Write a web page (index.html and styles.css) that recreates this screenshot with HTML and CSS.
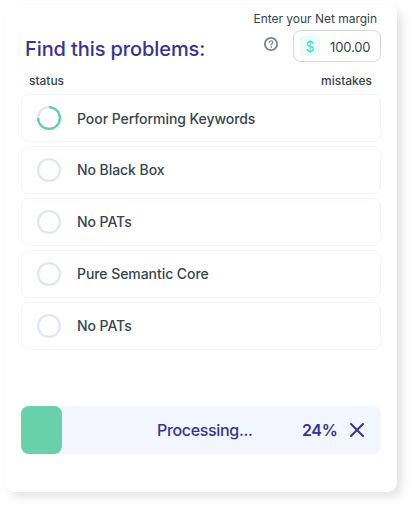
FILE: index.html
```html
<!DOCTYPE html>
<html lang="en">
<head>
<meta charset="utf-8">
<title>Find this problems</title>
<link rel="stylesheet" href="styles.css">
</head>
<body>
<main class="card">
  <header class="head">
    <h1 class="title">Find this problems:</h1>
    <div class="margin">
      <div class="margin-label">Enter your Net margin</div>
      <div class="margin-row">
        <svg class="help" viewBox="0 0 14 14" fill="none" stroke="#75838f" stroke-linecap="round"><circle cx="7" cy="7" r="6.1" stroke-width="1.8"/><path d="M5.2 5.6C5.2 3.2 8.8 3.2 8.8 5.4C8.8 6.8 7.1 6.7 7.1 8" stroke-width="1.2"/><circle cx="7.1" cy="10" r=".3" stroke-width=".9"/></svg>
        <div class="field"><span class="currency">$</span><span class="amount">100.00</span></div>
      </div>
    </div>
  </header>
  <div class="columns"><span>status</span><span>mistakes</span></div>
  <ul class="list">
    <li class="item"><svg class="ring" viewBox="0 0 24 24" fill="none" stroke-width="2.2"><circle cx="12" cy="12" r="10.9" stroke="#e1e4f5"/><path d="M12 1.1A10.9 10.9 0 1 1 1.1 12" stroke="#63cfa7"/></svg><span>Poor Performing Keywords</span></li>
    <li class="item"><svg class="ring" viewBox="0 0 24 24" fill="none" stroke-width="2.2"><circle cx="12" cy="12" r="10.9" stroke="#e1e4f5"/></svg><span>No Black Box</span></li>
    <li class="item"><svg class="ring" viewBox="0 0 24 24" fill="none" stroke-width="2.2"><circle cx="12" cy="12" r="10.9" stroke="#e1e4f5"/></svg><span>No PATs</span></li>
    <li class="item"><svg class="ring" viewBox="0 0 24 24" fill="none" stroke-width="2.2"><circle cx="12" cy="12" r="10.9" stroke="#e1e4f5"/></svg><span>Pure Semantic Core</span></li>
    <li class="item"><svg class="ring" viewBox="0 0 24 24" fill="none" stroke-width="2.2"><circle cx="12" cy="12" r="10.9" stroke="#e1e4f5"/></svg><span>No PATs</span></li>
  </ul>
  <div class="progress">
    <div class="bar"></div>
    <span class="processing">Processing...</span>
    <span class="percent">24%</span>
    <svg class="close" viewBox="0 0 14 14" fill="none" stroke="#363395" stroke-width="2" stroke-linecap="round"><path d="M1 1L13 13M13 1L1 13"/></svg>
  </div>
</main>
</body>
</html>
```
FILE: styles.css
```css
* { box-sizing: border-box; }
body { margin: 0; padding: 5px; height: 506px; background: #fff; font-family: Inter, sans-serif; color: #36454f; overflow: hidden; }
.card { width: 392px; height: 487px; padding: 0 16px; background: #fff; border-radius: 9px; box-shadow: 5px 5px 10px rgba(0,0,0,.11); display: flex; flex-direction: column; }
.head { display: flex; justify-content: space-between; height: 57px; }
.title { margin: 31px 0 0 4px; font-size: 20px; line-height: 26px; font-weight: 500; letter-spacing: -.1px; color: #363395; white-space: nowrap; }
.margin { display: flex; flex-direction: column; align-items: flex-end; }
.margin-label { margin: 6px 4px 0 0; height: 19px; font-size: 12px; line-height: 16px; white-space: nowrap; letter-spacing: -.02px; }
.margin-row { display: flex; gap: 15px; }
.help { width: 14px; height: 14px; margin-top: 7px; }
.field { width: 88px; height: 32px; border: 1px solid #d3d9de; border-radius: 8px; display: flex; align-items: center; padding-left: 6px; }
.currency { width: 20px; height: 20px; border-radius: 3px; background: #ecfcf8; color: #3fdfbb; font-size: 14px; line-height: 21px; text-align: center; }
.amount { margin-left: 10px; font-size: 13px; line-height: 18px; padding-top: 2px; letter-spacing: -.15px; }
.columns { display: flex; justify-content: space-between; height: 32px; padding: 11px 9px 0 8px; font-size: 12px; line-height: 16px; font-weight: 500; letter-spacing: -.02px; }
.list { list-style: none; margin: 0; padding: 0; display: grid; gap: 4px; }
.item { height: 48px; border: 1px solid #f2f4fe; border-radius: 8px; display: flex; align-items: center; gap: 16px; padding-left: 15px; font-size: 14px; line-height: 20px; font-weight: 500; letter-spacing: -.06px; white-space: nowrap; }
.ring { width: 24px; height: 24px; }
.item:first-child span { padding-top: 2px; }
.progress { margin-top: 56px; height: 48px; border-radius: 8px; background: #f2f6fe; color: #363395; display: flex; align-items: center; font-size: 16px; line-height: 20px; font-weight: 500; }
.bar { width: 41px; height: 48px; border-radius: 8px; background: #68d0aa; }
.processing { width: 145px; margin-left: 95px; letter-spacing: -.33px; }
.percent { width: 48px; font-weight: 600; letter-spacing: -.35px; }
.close { width: 14px; height: 14px; }
```
